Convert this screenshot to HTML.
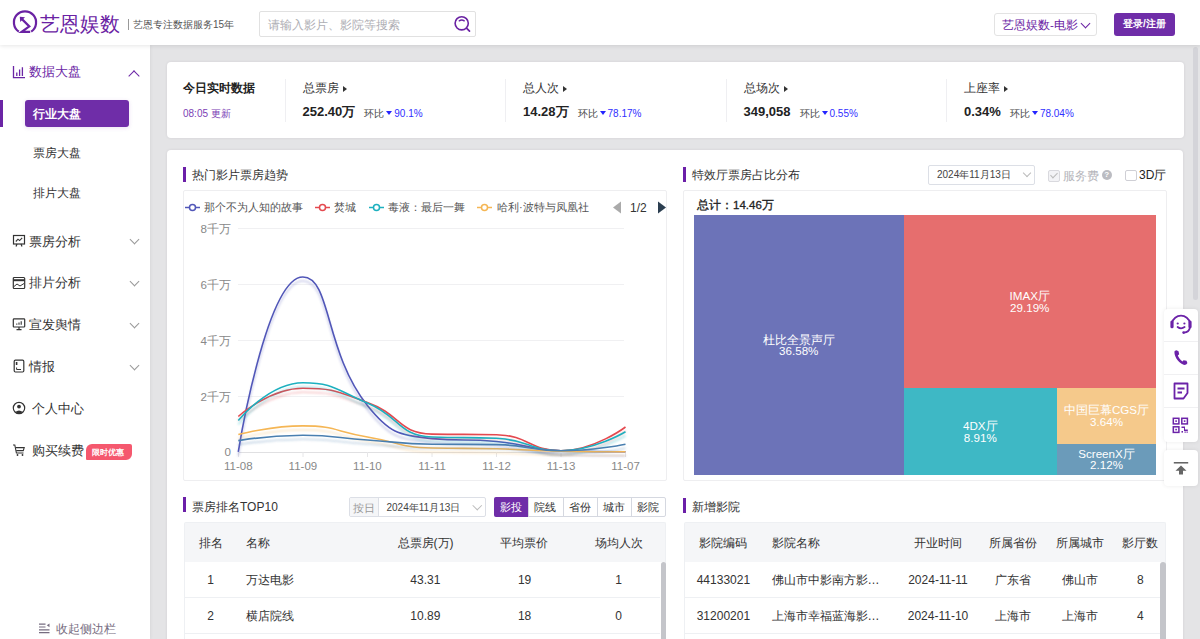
<!DOCTYPE html>
<html><head><meta charset="utf-8">
<style>
*{margin:0;padding:0;box-sizing:border-box;}
html,body{width:1200px;height:639px;overflow:hidden;}
body{font-weight:500;font-family:"Liberation Sans",sans-serif;background:#e4e4e6;color:#333;position:relative;}
.abs{position:absolute;}
.t{position:absolute;white-space:nowrap;line-height:1;}
#hdr{position:absolute;left:0;top:0;width:1200px;height:45px;background:#fff;box-shadow:0 1px 4px rgba(0,0,0,0.10);z-index:5;}
#side{position:absolute;left:0;top:45px;width:150px;height:594px;background:#fff;z-index:4;box-shadow:1px 0 3px rgba(0,0,0,0.05);}
.card{position:absolute;background:#fff;border-radius:4px;box-shadow:0 0 3px rgba(40,20,60,0.09);}
.purple{color:#6b25a5;}
.menu{font-size:12.5px;color:#333;}
.sub{font-size:11.7px;color:#333;}
.chev{position:absolute;width:7px;height:7px;border-right:1.2px solid #999;border-bottom:1.2px solid #999;transform:rotate(45deg);}
</style></head>
<body>
<div id="hdr">
  <svg class="abs" style="left:0;top:0" width="40" height="45" viewBox="0 0 40 45">
    <path d="M18.8,31.6 A11.1,11.1 0 1 1 31.2,31.6" fill="none" stroke="#6a22a3" stroke-width="2.2"/>
    <path d="M21.2,18.4 L29.3,26.4 L21.6,31.9 L30.2,31.9" fill="none" stroke="#6a22a3" stroke-width="2.2" stroke-linejoin="miter"/>
    <path d="M19.8,16.8 L25,17.2 L20.2,22 Z" fill="#6a22a3"/>
  </svg>
  <div class="t purple" style="left:40px;top:13.5px;font-size:20.2px;font-weight:500;color:#6a22a3">艺恩娱数</div>
  <div class="abs" style="left:127.5px;top:19px;width:1px;height:10.5px;background:#999;"></div>
  <div class="t" style="left:133px;top:19.5px;font-size:10px;color:#555;font-weight:500">艺恩专注数据服务15年</div>
  <div class="abs" style="left:259px;top:11px;width:217px;height:26px;border:1px solid #e1e1e1;border-radius:2px;"></div>
  <div class="t" style="left:268px;top:19px;font-size:11.6px;color:#aeaeb4">请输入影片、影院等搜索</div>
  <svg class="abs" style="left:450px;top:12px" width="24" height="24" viewBox="0 0 24 24">
    <circle cx="11.7" cy="11.3" r="6.6" fill="none" stroke="#6a22a3" stroke-width="1.6"/>
    <path d="M9.3,8.8 Q11.7,7.0 14.2,8.8" fill="none" stroke="#6a22a3" stroke-width="1.5" stroke-linecap="round"/>
    <path d="M16.5,16.2 L19.5,19.2" stroke="#6a22a3" stroke-width="1.7" stroke-linecap="round"/>
  </svg>
  <div class="abs" style="left:994px;top:13px;width:103px;height:23px;border:1px solid #e3e3e3;border-radius:3px;"></div>
  <div class="t" style="left:1002px;top:19px;font-size:11.6px;color:#6a22a3;font-weight:500">艺恩娱数-电影</div>
  <div class="chev" style="left:1082px;top:20px;border-color:#6a22a3;"></div>
  <div class="abs" style="left:1114px;top:13px;width:61px;height:23px;background:#6f2da8;border-radius:3px;"></div>
  <div class="t" style="left:1123px;top:19px;font-size:10px;color:#fff;font-weight:bold">登录/注册</div>
</div>

<div id="side">
  <svg class="abs" style="left:12px;top:20px" width="14" height="14" viewBox="0 0 14 14">
    <path d="M1.5,1 V12.6 H13" fill="none" stroke="#6b25a5" stroke-width="1.3"/>
    <path d="M4.8,7.5 V11 M7.6,4.5 V11 M10.4,2.2 V11" stroke="#6b25a5" stroke-width="1.3"/>
  </svg>
  <div class="t menu" style="left:29px;top:20.5px;color:#6b25a5">数据大盘</div>
  <div class="chev" style="left:129.5px;top:27px;width:8px;height:8px;border-width:0 1.5px 1.5px 0;transform:rotate(-135deg);border-color:#6b25a5;"></div>
  <div class="abs" style="left:0;top:55px;width:3px;height:26.5px;background:#6b25a5;"></div>
  <div class="abs" style="left:25px;top:55px;width:104px;height:27px;background:#6f2da8;border-radius:3px;box-shadow:0 1px 4px rgba(111,45,168,0.15)"></div>
  <div class="t sub" style="left:33px;top:62.5px;color:#fff;font-weight:bold">行业大盘</div>
  <div class="t sub" style="left:33px;top:102px;">票房大盘</div>
  <div class="t sub" style="left:33px;top:142px;">排片大盘</div>

  <svg class="abs" style="left:12px;top:189px" width="14" height="14" viewBox="0 0 14 14">
    <rect x="1.5" y="1.5" width="11" height="8.5" fill="none" stroke="#333" stroke-width="1.2"/>
    <path d="M3.8,7.5 L6,5.2 L7.6,6.6 L10.2,3.8" fill="none" stroke="#333" stroke-width="1.1"/>
    <path d="M5,10 L4,12.5 M9,10 L10,12.5" stroke="#333" stroke-width="1.2"/>
  </svg>
  <div class="t menu" style="left:29px;top:190.5px;">票房分析</div>
  <div class="chev" style="left:130.5px;top:191px;"></div>

  <svg class="abs" style="left:12px;top:231px" width="14" height="14" viewBox="0 0 14 14">
    <rect x="1.3" y="1.5" width="11.4" height="11" rx="1" fill="none" stroke="#333" stroke-width="1.2"/>
    <path d="M1.3,4.2 H12.7" stroke="#333" stroke-width="2"/>
    <path d="M2,10.5 L5,8 L8,10 L12,7.5" fill="none" stroke="#333" stroke-width="1"/>
  </svg>
  <div class="t menu" style="left:29px;top:232px;">排片分析</div>
  <div class="chev" style="left:130.5px;top:233px;"></div>

  <svg class="abs" style="left:12px;top:272px" width="14" height="14" viewBox="0 0 14 14">
    <rect x="1.3" y="1.8" width="11.4" height="8.2" rx="0.8" fill="none" stroke="#333" stroke-width="1.2"/>
    <path d="M4.5,12.6 H9.5 M7,10 V12.6" stroke="#333" stroke-width="1.2"/>
    <path d="M4.8,7.8 V6.5 M7,7.8 V5.4 M9.2,7.8 V4.2" stroke="#333" stroke-width="1.1"/>
  </svg>
  <div class="t menu" style="left:29px;top:273.5px;">宣发舆情</div>
  <div class="chev" style="left:130.5px;top:275px;"></div>

  <svg class="abs" style="left:12px;top:314px" width="14" height="14" viewBox="0 0 14 14">
    <rect x="2.2" y="1.2" width="9.6" height="11.8" rx="1.2" fill="none" stroke="#333" stroke-width="1.2"/>
    <path d="M4.6,3 V6" stroke="#333" stroke-width="1.6"/>
    <path d="M4.6,8.5 V10.5 H9" fill="none" stroke="#333" stroke-width="1"/>
  </svg>
  <div class="t menu" style="left:29px;top:315.5px;">情报</div>
  <div class="chev" style="left:130.5px;top:317px;"></div>

  <svg class="abs" style="left:12px;top:356px" width="14" height="14" viewBox="0 0 14 14">
    <circle cx="7" cy="7" r="5.7" fill="none" stroke="#333" stroke-width="1.2"/>
    <circle cx="7" cy="5.6" r="1.9" fill="#333"/>
    <path d="M3.2,11 Q7,7.8 10.8,11 Q7,13.6 3.2,11 Z" fill="#333"/>
  </svg>
  <div class="t menu" style="left:32px;top:357.5px;">个人中心</div>

  <svg class="abs" style="left:12px;top:398px" width="14" height="14" viewBox="0 0 14 14">
    <path d="M1,2 H2.8 L4.4,10 H11.5" fill="none" stroke="#333" stroke-width="1.1"/>
    <path d="M3.6,4.6 H12.2 L11.3,7.6 H4.2" fill="none" stroke="#333" stroke-width="1.1"/>
    <circle cx="5.5" cy="12" r="0.9" fill="#333"/><circle cx="10.5" cy="12" r="0.9" fill="#333"/>
  </svg>
  <div class="t menu" style="left:32px;top:399.5px;">购买续费</div>
  <div class="abs" style="left:86px;top:399px;width:45.5px;height:15.5px;background:#f5586e;border-radius:6px 2px 6px 1px;"></div>
  <div class="t" style="left:92px;top:403.5px;font-size:8px;color:#fff;font-weight:bold">限时优惠</div>

  <svg class="abs" style="left:38px;top:577px" width="12" height="12" viewBox="0 0 12 12">
    <path d="M1,2.2 H7.5 M1,5 H7.5 M1,7.8 H11.5 M1,10.6 H11.5" stroke="#766c80" stroke-width="1.2"/>
    <path d="M11.5,1.4 L8.8,3.3 L11.5,5.2 Z" fill="#766c80"/>
  </svg>
  <div class="t" style="left:56px;top:577.5px;font-size:11.6px;color:#766c80">收起侧边栏</div>
</div>


<div class="card" style="left:166.5px;top:61.5px;width:1017px;height:76.5px;">
  <div class="t" style="left:16.5px;top:20px;font-size:12px;color:#222;font-weight:bold">今日实时数据</div>
  <div class="t" style="left:16.5px;top:47.5px;font-size:10px;color:#7b3fb5">08:05 更新</div>
  <div class="abs" style="left:118px;top:17px;width:1px;height:43px;background:#efeff2"></div>
  <div class="abs" style="left:338.5px;top:17px;width:1px;height:43px;background:#efeff2"></div>
  <div class="abs" style="left:559px;top:17px;width:1px;height:43px;background:#efeff2"></div>
  <div class="abs" style="left:779.5px;top:17px;width:1px;height:43px;background:#efeff2"></div>
  <div class="t" style="left:136.0px;top:20.5px;font-size:12px;color:#333">总票房<span style="display:inline-block;width:0;height:0;border-left:4px solid #333;border-top:3.5px solid transparent;border-bottom:3.5px solid transparent;margin-left:4px;vertical-align:0px"></span></div>
  <div class="t val" style="margin-top:0.5px;left:136.0px;top:43px;font-size:13px;color:#222;font-weight:bold">252.40万<span style="font-size:10px;font-weight:normal;color:#444;margin-left:9px;position:relative;top:1px">环比</span><span style="display:inline-block;width:0;height:0;border-top:4px solid #2424ff;border-left:3px solid transparent;border-right:3px solid transparent;margin-left:2px;margin-right:2px;vertical-align:1px"></span><span style="font-size:10px;font-weight:normal;color:#3030ff;position:relative;top:1px">90.1%</span></div>
  <div class="t" style="left:356.5px;top:20.5px;font-size:12px;color:#333">总人次<span style="display:inline-block;width:0;height:0;border-left:4px solid #333;border-top:3.5px solid transparent;border-bottom:3.5px solid transparent;margin-left:4px;vertical-align:0px"></span></div>
  <div class="t val" style="margin-top:0.5px;left:356.5px;top:43px;font-size:13px;color:#222;font-weight:bold">14.28万<span style="font-size:10px;font-weight:normal;color:#444;margin-left:9px;position:relative;top:1px">环比</span><span style="display:inline-block;width:0;height:0;border-top:4px solid #2424ff;border-left:3px solid transparent;border-right:3px solid transparent;margin-left:2px;margin-right:2px;vertical-align:1px"></span><span style="font-size:10px;font-weight:normal;color:#3030ff;position:relative;top:1px">78.17%</span></div>
  <div class="t" style="left:577.0px;top:20.5px;font-size:12px;color:#333">总场次<span style="display:inline-block;width:0;height:0;border-left:4px solid #333;border-top:3.5px solid transparent;border-bottom:3.5px solid transparent;margin-left:4px;vertical-align:0px"></span></div>
  <div class="t val" style="margin-top:0.5px;left:577.0px;top:43px;font-size:13px;color:#222;font-weight:bold">349,058<span style="font-size:10px;font-weight:normal;color:#444;margin-left:9px;position:relative;top:1px">环比</span><span style="display:inline-block;width:0;height:0;border-top:4px solid #2424ff;border-left:3px solid transparent;border-right:3px solid transparent;margin-left:2px;margin-right:2px;vertical-align:1px"></span><span style="font-size:10px;font-weight:normal;color:#3030ff;position:relative;top:1px">0.55%</span></div>
  <div class="t" style="left:797.5px;top:20.5px;font-size:12px;color:#333">上座率<span style="display:inline-block;width:0;height:0;border-left:4px solid #333;border-top:3.5px solid transparent;border-bottom:3.5px solid transparent;margin-left:4px;vertical-align:0px"></span></div>
  <div class="t val" style="margin-top:0.5px;left:797.5px;top:43px;font-size:13px;color:#222;font-weight:bold">0.34%<span style="font-size:10px;font-weight:normal;color:#444;margin-left:9px;position:relative;top:1px">环比</span><span style="display:inline-block;width:0;height:0;border-top:4px solid #2424ff;border-left:3px solid transparent;border-right:3px solid transparent;margin-left:2px;margin-right:2px;vertical-align:1px"></span><span style="font-size:10px;font-weight:normal;color:#3030ff;position:relative;top:1px">78.04%</span></div>
  
</div>

<div class="card" style="left:167px;top:150px;width:1016px;height:520px;">
  <div class="abs" style="left:16px;top:17px;width:3px;height:15px;background:#6b1fa8"></div>
  <div class="t" style="left:25px;top:19px;font-size:12px;color:#333;font-weight:500">热门影片票房趋势</div>
  <div class="abs" style="left:16px;top:40px;width:484px;height:291px;border:1px solid #eeeef0;border-radius:2px"></div>
  <div class="abs" style="left:516px;top:17px;width:3px;height:15px;background:#6b1fa8"></div>
  <div class="t" style="left:525px;top:19px;font-size:12px;color:#333;font-weight:500">特效厅票房占比分布</div>
  <div class="abs" style="left:516px;top:40px;width:484px;height:291px;border:1px solid #eeeef0;border-radius:2px"></div>

  <div class="abs" style="left:16px;top:347px;width:3px;height:15px;background:#6b1fa8"></div>
  <div class="t" style="left:25px;top:351px;font-size:12px;color:#333;font-weight:500">票房排名TOP10</div>
  <div class="abs" style="left:516px;top:348px;width:3px;height:15px;background:#6b1fa8"></div>
  <div class="t" style="left:525px;top:351px;font-size:12px;color:#333;font-weight:500">新增影院</div>
</div>
<svg class="abs" style="left:0;top:0" width="1200" height="639" viewBox="0 0 1200 639">
  <defs><filter id="sh" x="-10%" y="-10%" width="120%" height="130%"><feGaussianBlur in="SourceGraphic" stdDeviation="1.2"/><feOffset dy="4" result="b"/><feColorMatrix in="b" type="matrix" values="1 0 0 0 0  0 1 0 0 0  0 0 1 0 0  0 0 0 0.32 0" result="c"/><feMerge><feMergeNode in="c"/><feMergeNode in="SourceGraphic"/></feMerge></filter></defs>
  <g stroke="#f0f0f2" stroke-width="1">
    <path d="M238,228.5 H624 M238,284.5 H624 M238,340.5 H624 M238,396.5 H624"/>
  </g>
  <path d="M238,452.5 H625.5" stroke="#e0e0e2" stroke-width="1"/>
  <path d="M238.5,452 V457 M303,452 V457 M367.5,452 V457 M432,452 V457 M496.5,452 V457 M561,452 V457 M625.5,452 V457" stroke="#e6e6e8" stroke-width="1"/>
  <g font-family="Liberation Sans, sans-serif" font-size="11.6" fill="#888" text-anchor="end">
    <text x="231" y="232.5">8千万</text><text x="231" y="288.5">6千万</text><text x="231" y="344.5">4千万</text><text x="231" y="400.5">2千万</text><text x="231" y="456">0</text>
  </g>
  <g font-family="Liberation Sans, sans-serif" font-size="11.5" fill="#888" text-anchor="middle">
    <text x="238.3" y="469.5">11-08</text><text x="302.9" y="469.5">11-09</text><text x="367.4" y="469.5">11-10</text><text x="432" y="469.5">11-11</text><text x="496.5" y="469.5">11-12</text><text x="561" y="469.5">11-13</text><text x="625.5" y="469.5">11-07</text>
  </g>
  <path d="M238.30,451.80 C238.30,451.80 266.46,277.00 302.90,277.00 C331.01,277.00 324.51,351.81 367.40,405.50 C389.06,432.61 397.84,435.34 432.00,438.60 C462.39,441.50 464.40,438.60 496.50,441.50 C528.90,444.43 528.59,449.89 561.00,450.80 C593.09,451.70 625.50,451.70 625.50,451.70" fill="none" stroke="#5157b8" stroke-width="1.6" filter="url(#sh)"/>
<path d="M238.30,416.50 C238.30,416.50 269.57,388.30 302.90,388.30 C334.12,388.30 336.50,391.54 367.40,402.50 C401.05,414.44 397.97,433.43 432.00,434.10 C462.52,434.70 464.74,434.10 496.50,434.70 C529.24,435.32 529.29,450.80 561.00,450.80 C593.79,450.80 625.50,427.00 625.50,427.00" fill="none" stroke="#e4494f" stroke-width="1.6" filter="url(#sh)"/>
<path d="M238.30,420.60 C238.30,420.60 268.98,382.70 302.90,382.70 C333.53,382.70 336.36,389.94 367.40,403.00 C400.91,417.09 397.73,435.53 432.00,437.00 C462.28,438.30 464.54,437.00 496.50,438.30 C529.04,439.62 529.12,450.80 561.00,450.80 C593.62,450.80 625.50,431.80 625.50,431.80" fill="none" stroke="#1db0bf" stroke-width="1.6" filter="url(#sh)"/>
<path d="M238.30,434.60 C238.30,434.60 270.69,425.90 302.90,425.90 C335.24,425.90 335.15,431.48 367.40,437.00 C399.70,442.53 399.47,447.19 432.00,448.00 C464.02,448.80 464.26,448.00 496.50,448.80 C528.76,449.60 528.74,450.70 561.00,451.20 C593.24,451.70 625.50,451.70 625.50,451.70" fill="none" stroke="#f5b654" stroke-width="1.6" filter="url(#sh)"/>
<path d="M238.30,440.60 C238.30,440.60 270.59,435.30 302.90,435.30 C335.14,435.30 335.14,437.78 367.40,440.00 C399.69,442.23 399.67,443.80 432.00,444.20 C464.22,444.60 464.32,444.20 496.50,444.60 C528.82,445.00 528.76,450.80 561.00,450.80 C593.26,450.80 625.50,444.20 625.50,444.20" fill="none" stroke="#4a7fb0" stroke-width="1.6" filter="url(#sh)"/>

  <g stroke-width="1.5" fill="#fff">
    <path d="M185,207.5 H200" stroke="#5157b8"/><circle cx="192.5" cy="207.5" r="3" stroke="#5157b8"/>
    <path d="M315,207.5 H330" stroke="#e4494f"/><circle cx="322.5" cy="207.5" r="3" stroke="#e4494f"/>
    <path d="M369,207.5 H384" stroke="#1db0bf"/><circle cx="376.5" cy="207.5" r="3" stroke="#1db0bf"/>
    <path d="M477,207.5 H492" stroke="#f5b654"/><circle cx="484.5" cy="207.5" r="3" stroke="#f5b654"/>
  </g>
  <g font-family="Liberation Sans, sans-serif" font-size="11" fill="#555">
    <text x="204" y="211">那个不为人知的故事</text><text x="334" y="211">焚城</text><text x="388" y="211">毒液：最后一舞</text><text x="497" y="211">哈利·波特与凤凰社</text>
  </g>
  <path d="M621,201.5 L613,207.5 L621,213.5 Z" fill="#aaa"/>
  <text x="630" y="212" font-family="Liberation Sans, sans-serif" font-size="12" fill="#333">1/2</text>
  <path d="M658,201.5 L666,207.5 L658,213.5 Z" fill="#2b3e50"/>
</svg>

<div class="abs" style="left:694px;top:215px;width:462px;height:260px;font-size:11.6px;color:#fff;line-height:11.5px;text-align:center;font-weight:500">
  <div class="abs" style="left:0;top:0;width:209.5px;height:260px;background:#6c73b8;display:flex;align-items:center;justify-content:center"><div>杜比全景声厅<br>36.58%</div></div>
  <div class="abs" style="left:209.5px;top:0;width:252.5px;height:173px;background:#e66e6e;display:flex;align-items:center;justify-content:center"><div>IMAX厅<br>29.19%</div></div>
  <div class="abs" style="left:209.5px;top:173px;width:153.5px;height:87px;background:#3eb8c5;display:flex;align-items:center;justify-content:center"><div>4DX厅<br>8.91%</div></div>
  <div class="abs" style="left:363px;top:173px;width:99px;height:55.5px;background:#f5c98b;display:flex;align-items:center;justify-content:center"><div>中国巨幕CGS厅<br>3.64%</div></div>
  <div class="abs" style="left:363px;top:228.5px;width:99px;height:31.5px;background:#6b9bba;display:flex;align-items:center;justify-content:center"><div>ScreenX厅<br>2.12%</div></div>
</div>
<div class="t" style="left:697px;top:200px;font-size:11.5px;color:#222;font-weight:normal;-webkit-text-stroke:0.3px #222">总计：14.46万</div>
<div class="abs" style="left:928px;top:165px;width:107px;height:20px;border:1px solid #dcdfe6;border-radius:2px;"></div>
<div class="t" style="left:937px;top:170px;font-size:10px;color:#444">2024年11月13日</div>
<div class="chev" style="left:1024px;top:170px;width:6px;height:6px;border-color:#bbb;border-width:0 1px 1px 0"></div>
<div class="abs" style="left:1048px;top:169.5px;width:12px;height:12px;border:1px solid #d9d9de;background:#f3f3f6;border-radius:2px"></div>
<div class="abs" style="left:1051.5px;top:171px;width:4px;height:7px;border:solid #bbb;border-width:0 1.2px 1.2px 0;transform:rotate(45deg)"></div>
<div class="t" style="left:1063px;top:169.5px;font-size:11.6px;color:#b4b4ba">服务费</div>
<div class="abs" style="left:1101.5px;top:169.5px;width:10.5px;height:10.5px;border-radius:50%;background:#bbbcc2;color:#fff;font-size:8px;font-weight:bold;text-align:center;line-height:10.5px">?</div>
<div class="abs" style="left:1125px;top:169.5px;width:11.5px;height:11.5px;border:1px solid #cfcfd5;background:#fff;border-radius:2px"></div>
<div class="t" style="left:1139px;top:169px;font-size:12px;color:#222;font-weight:500">3D厅</div>
<div class="abs" style="left:348.5px;top:497px;width:137px;height:20px;border:1px solid #dcdfe6;border-radius:2px;overflow:hidden"><div class="abs" style="left:0;top:0;width:29px;height:18px;background:#f5f6f8;border-right:1px solid #dcdfe6"></div></div>
<div class="t" style="left:353px;top:502.5px;font-size:10.5px;color:#999;">按日</div>
<div class="t" style="left:386.5px;top:502.5px;font-size:10px;color:#444;">2024年11月13日</div>
<div class="chev" style="left:473.5px;top:501.5px;width:6.5px;height:6.5px;border-color:#bbb;border-width:0 1px 1px 0"></div>
<div class="abs" style="left:494px;top:497px;width:171.5px;height:20px;border:1px solid #d5d8e0;border-radius:2px;background:#fff"></div>
<div class="abs" style="left:494.0px;top:497px;width:35px;height:20px;background:#6f2da8;border-radius:2px 0 0 2px"></div>
<div class="t" style="left:494.0px;width:34.3px;text-align:center;top:502px;font-size:11px;font-weight:500;color:#fff">影投</div>
<div class="abs" style="left:528.3px;top:497px;width:1px;height:20px;background:#d5d8e0"></div>
<div class="t" style="left:528.3px;width:34.3px;text-align:center;top:502px;font-size:11px;font-weight:500;color:#333">院线</div>
<div class="abs" style="left:562.6px;top:497px;width:1px;height:20px;background:#d5d8e0"></div>
<div class="t" style="left:562.6px;width:34.3px;text-align:center;top:502px;font-size:11px;font-weight:500;color:#333">省份</div>
<div class="abs" style="left:596.9px;top:497px;width:1px;height:20px;background:#d5d8e0"></div>
<div class="t" style="left:596.9px;width:34.3px;text-align:center;top:502px;font-size:11px;font-weight:500;color:#333">城市</div>
<div class="abs" style="left:631.2px;top:497px;width:1px;height:20px;background:#d5d8e0"></div>
<div class="t" style="left:631.2px;width:34.3px;text-align:center;top:502px;font-size:11px;font-weight:500;color:#333">影院</div>
<div class="abs" style="left:184px;top:522px;width:482px;height:39.5px;background:#f5f6f8;border-radius:2px 2px 0 0;border:1px solid #eef0f3;border-bottom:none"></div>
<div class="abs" style="left:184px;top:561.5px;width:482px;height:80px;border-left:1px solid #eef0f3;border-right:1px solid #eef0f3"></div>
<div class="abs" style="left:185px;top:596.5px;width:475px;height:1px;background:#eef0f3"></div>
<div class="abs" style="left:185px;top:632.5px;width:475px;height:1px;background:#eef0f3"></div>
<div class="abs" style="left:660.5px;top:562px;width:5px;height:80px;background:#c4c5ca;border-radius:3px"></div>
<div class="t" style="left:110.6px;width:200px;text-align:center;top:536.5px;font-size:12px;color:#333;">排名</div>
<div class="t" style="left:245.8px;top:536.5px;font-size:12px;color:#333;">名称</div>
<div class="t" style="left:325.6px;width:200px;text-align:center;top:536.5px;font-size:12px;color:#333;">总票房(万)</div>
<div class="t" style="left:424.4px;width:200px;text-align:center;top:536.5px;font-size:12px;color:#333;">平均票价</div>
<div class="t" style="left:518.75px;width:200px;text-align:center;top:536.5px;font-size:12px;color:#333;">场均人次</div>
<div class="t" style="left:110.6px;width:200px;text-align:center;top:574px;font-size:12px;color:#333;">1</div>
<div class="t" style="left:245.8px;top:574px;font-size:12px;color:#333;">万达电影</div>
<div class="t" style="left:325.3px;width:200px;text-align:center;top:574px;font-size:12px;color:#333;">43.31</div>
<div class="t" style="left:424.6px;width:200px;text-align:center;top:574px;font-size:12px;color:#333;">19</div>
<div class="t" style="left:518.5px;width:200px;text-align:center;top:574px;font-size:12px;color:#333;">1</div>
<div class="t" style="left:110.6px;width:200px;text-align:center;top:610px;font-size:12px;color:#333;">2</div>
<div class="t" style="left:245.8px;top:610px;font-size:12px;color:#333;">横店院线</div>
<div class="t" style="left:325.3px;width:200px;text-align:center;top:610px;font-size:12px;color:#333;">10.89</div>
<div class="t" style="left:424.6px;width:200px;text-align:center;top:610px;font-size:12px;color:#333;">18</div>
<div class="t" style="left:518.5px;width:200px;text-align:center;top:610px;font-size:12px;color:#333;">0</div>
<div class="abs" style="left:683.5px;top:522px;width:482.5px;height:39.5px;background:#f5f6f8;border-radius:2px 2px 0 0;border:1px solid #eef0f3;border-bottom:none"></div>
<div class="abs" style="left:683.5px;top:561.5px;width:482.5px;height:80px;border-left:1px solid #eef0f3;border-right:1px solid #eef0f3"></div>
<div class="abs" style="left:684.5px;top:596.5px;width:475px;height:1px;background:#eef0f3"></div>
<div class="abs" style="left:684.5px;top:632.5px;width:475px;height:1px;background:#eef0f3"></div>
<div class="abs" style="left:1160px;top:562px;width:5.5px;height:80px;background:#c4c5ca;border-radius:3px"></div>
<div class="t" style="left:623.4px;width:200px;text-align:center;top:536.5px;font-size:12px;color:#333;">影院编码</div>
<div class="t" style="left:771.6px;top:536.5px;font-size:12px;color:#333;">影院名称</div>
<div class="t" style="left:838px;width:200px;text-align:center;top:536.5px;font-size:12px;color:#333;">开业时间</div>
<div class="t" style="left:913px;width:200px;text-align:center;top:536.5px;font-size:12px;color:#333;">所属省份</div>
<div class="t" style="left:979.7px;width:200px;text-align:center;top:536.5px;font-size:12px;color:#333;">所属城市</div>
<div class="t" style="left:1040.3px;width:200px;text-align:center;top:536.5px;font-size:12px;color:#333;">影厅数</div>
<div class="t" style="left:623.4px;width:200px;text-align:center;top:574px;font-size:12px;color:#333;">44133021</div>
<div class="t" style="left:771.6px;top:574px;font-size:12px;color:#333;">佛山市中影南方影…</div>
<div class="t" style="left:838px;width:200px;text-align:center;top:574px;font-size:12px;color:#333;">2024-11-11</div>
<div class="t" style="left:913px;width:200px;text-align:center;top:574px;font-size:12px;color:#333;">广东省</div>
<div class="t" style="left:979.5px;width:200px;text-align:center;top:574px;font-size:12px;color:#333;">佛山市</div>
<div class="t" style="left:1040.3px;width:200px;text-align:center;top:574px;font-size:12px;color:#333;">8</div>
<div class="t" style="left:623.4px;width:200px;text-align:center;top:610px;font-size:12px;color:#333;">31200201</div>
<div class="t" style="left:771.6px;top:610px;font-size:12px;color:#333;">上海市幸福蓝海影…</div>
<div class="t" style="left:838px;width:200px;text-align:center;top:610px;font-size:12px;color:#333;">2024-11-10</div>
<div class="t" style="left:913px;width:200px;text-align:center;top:610px;font-size:12px;color:#333;">上海市</div>
<div class="t" style="left:979.5px;width:200px;text-align:center;top:610px;font-size:12px;color:#333;">上海市</div>
<div class="t" style="left:1040.3px;width:200px;text-align:center;top:610px;font-size:12px;color:#333;">4</div>
<div class="abs" style="left:1164px;top:308.5px;width:34px;height:133px;background:#fff;border-radius:4px;box-shadow:0 0 4px rgba(0,0,0,0.08);z-index:6">
  <div class="abs" style="left:0;top:32.5px;width:34px;height:1px;background:#f0f0f2"></div>
  <div class="abs" style="left:0;top:65.5px;width:34px;height:1px;background:#f0f0f2"></div>
  <div class="abs" style="left:0;top:98.5px;width:34px;height:1px;background:#f0f0f2"></div>
  <svg class="abs" style="left:0;top:0" width="34" height="133" viewBox="0 0 34 133">
    <g fill="none" stroke="#6b22a8" stroke-width="1.8" stroke-linecap="round">
      <path d="M8,14 A9.2,9.2 0 0 1 26,14"/>
      <path d="M13.6,18 Q17,20.6 20.6,18"/>
      <path d="M25.8,19 Q25,23 20,23.6"/>
    </g>
    <circle cx="13.7" cy="14.5" r="1.1" fill="#6b22a8"/><circle cx="20.4" cy="14.5" r="1.1" fill="#6b22a8"/><rect x="6.4" y="11.6" width="3.2" height="7.6" rx="1.5" fill="#6b22a8"/><rect x="24.4" y="11.6" width="3.2" height="7.6" rx="1.5" fill="#6b22a8"/><circle cx="19.6" cy="23.6" r="1.3" fill="#6b22a8"/>
    <path d="M10.5,42.5 C10,46 13,53 19.5,55.8 C21,56.2 22.8,55.5 23.4,54 L22.5,51.8 L19.5,51.2 L18.5,52.5 C16.5,51.3 14.5,48.5 13.8,46.5 L15.2,45.3 L14.5,42.2 L12.5,41.2 C11.5,41.3 10.7,41.8 10.5,42.5 Z" fill="#6b22a8"/>
    <path d="M10.5,74.5 H23.5 V84 L19.5,89.5 H10.5 Z" fill="none" stroke="#6b22a8" stroke-width="1.8" stroke-linejoin="round"/>
    <path d="M13.5,79.5 H20.5 M13.5,83.5 H18" stroke="#6b22a8" stroke-width="1.8"/>
    <g fill="none" stroke="#6b22a8" stroke-width="1.5">
      <rect x="9.3" y="109.3" width="5.6" height="5.6"/><rect x="17.8" y="109.3" width="5.6" height="5.6"/><rect x="9.3" y="117.8" width="5.6" height="5.6"/>
    </g>
    <g fill="#6b22a8">
      <rect x="11.3" y="111.3" width="1.6" height="1.6"/><rect x="19.8" y="111.3" width="1.6" height="1.6"/><rect x="11.3" y="119.8" width="1.6" height="1.6"/>
      <path d="M17.5,117.5 H21 V120.5 H23.8 V122 H20 V119 H17.5 Z"/>
      <rect x="17.5" y="122" width="1.5" height="1.6"/><rect x="20.5" y="122.5" width="1.3" height="1.2"/><rect x="22.5" y="122.5" width="1.3" height="1.2"/>
    </g>
  </svg>
</div>
<div class="abs" style="left:1164px;top:450px;width:34px;height:36px;background:#fff;border-radius:4px;box-shadow:0 0 4px rgba(0,0,0,0.08);z-index:6">
  <svg class="abs" style="left:0;top:0" width="34" height="36" viewBox="0 0 34 36">
    <path d="M9.8,12.8 H24.2" stroke="#555" stroke-width="1.4"/>
    <path d="M17,15.5 L22.5,20.8 H19 V24.5 H15 V20.8 H11.5 Z" fill="#666"/>
  </svg>
</div>
<div class="abs" style="left:1192.5px;top:47px;width:5px;height:253px;background:#d4d4d9;border-radius:3px;z-index:3"></div>
</body></html>
